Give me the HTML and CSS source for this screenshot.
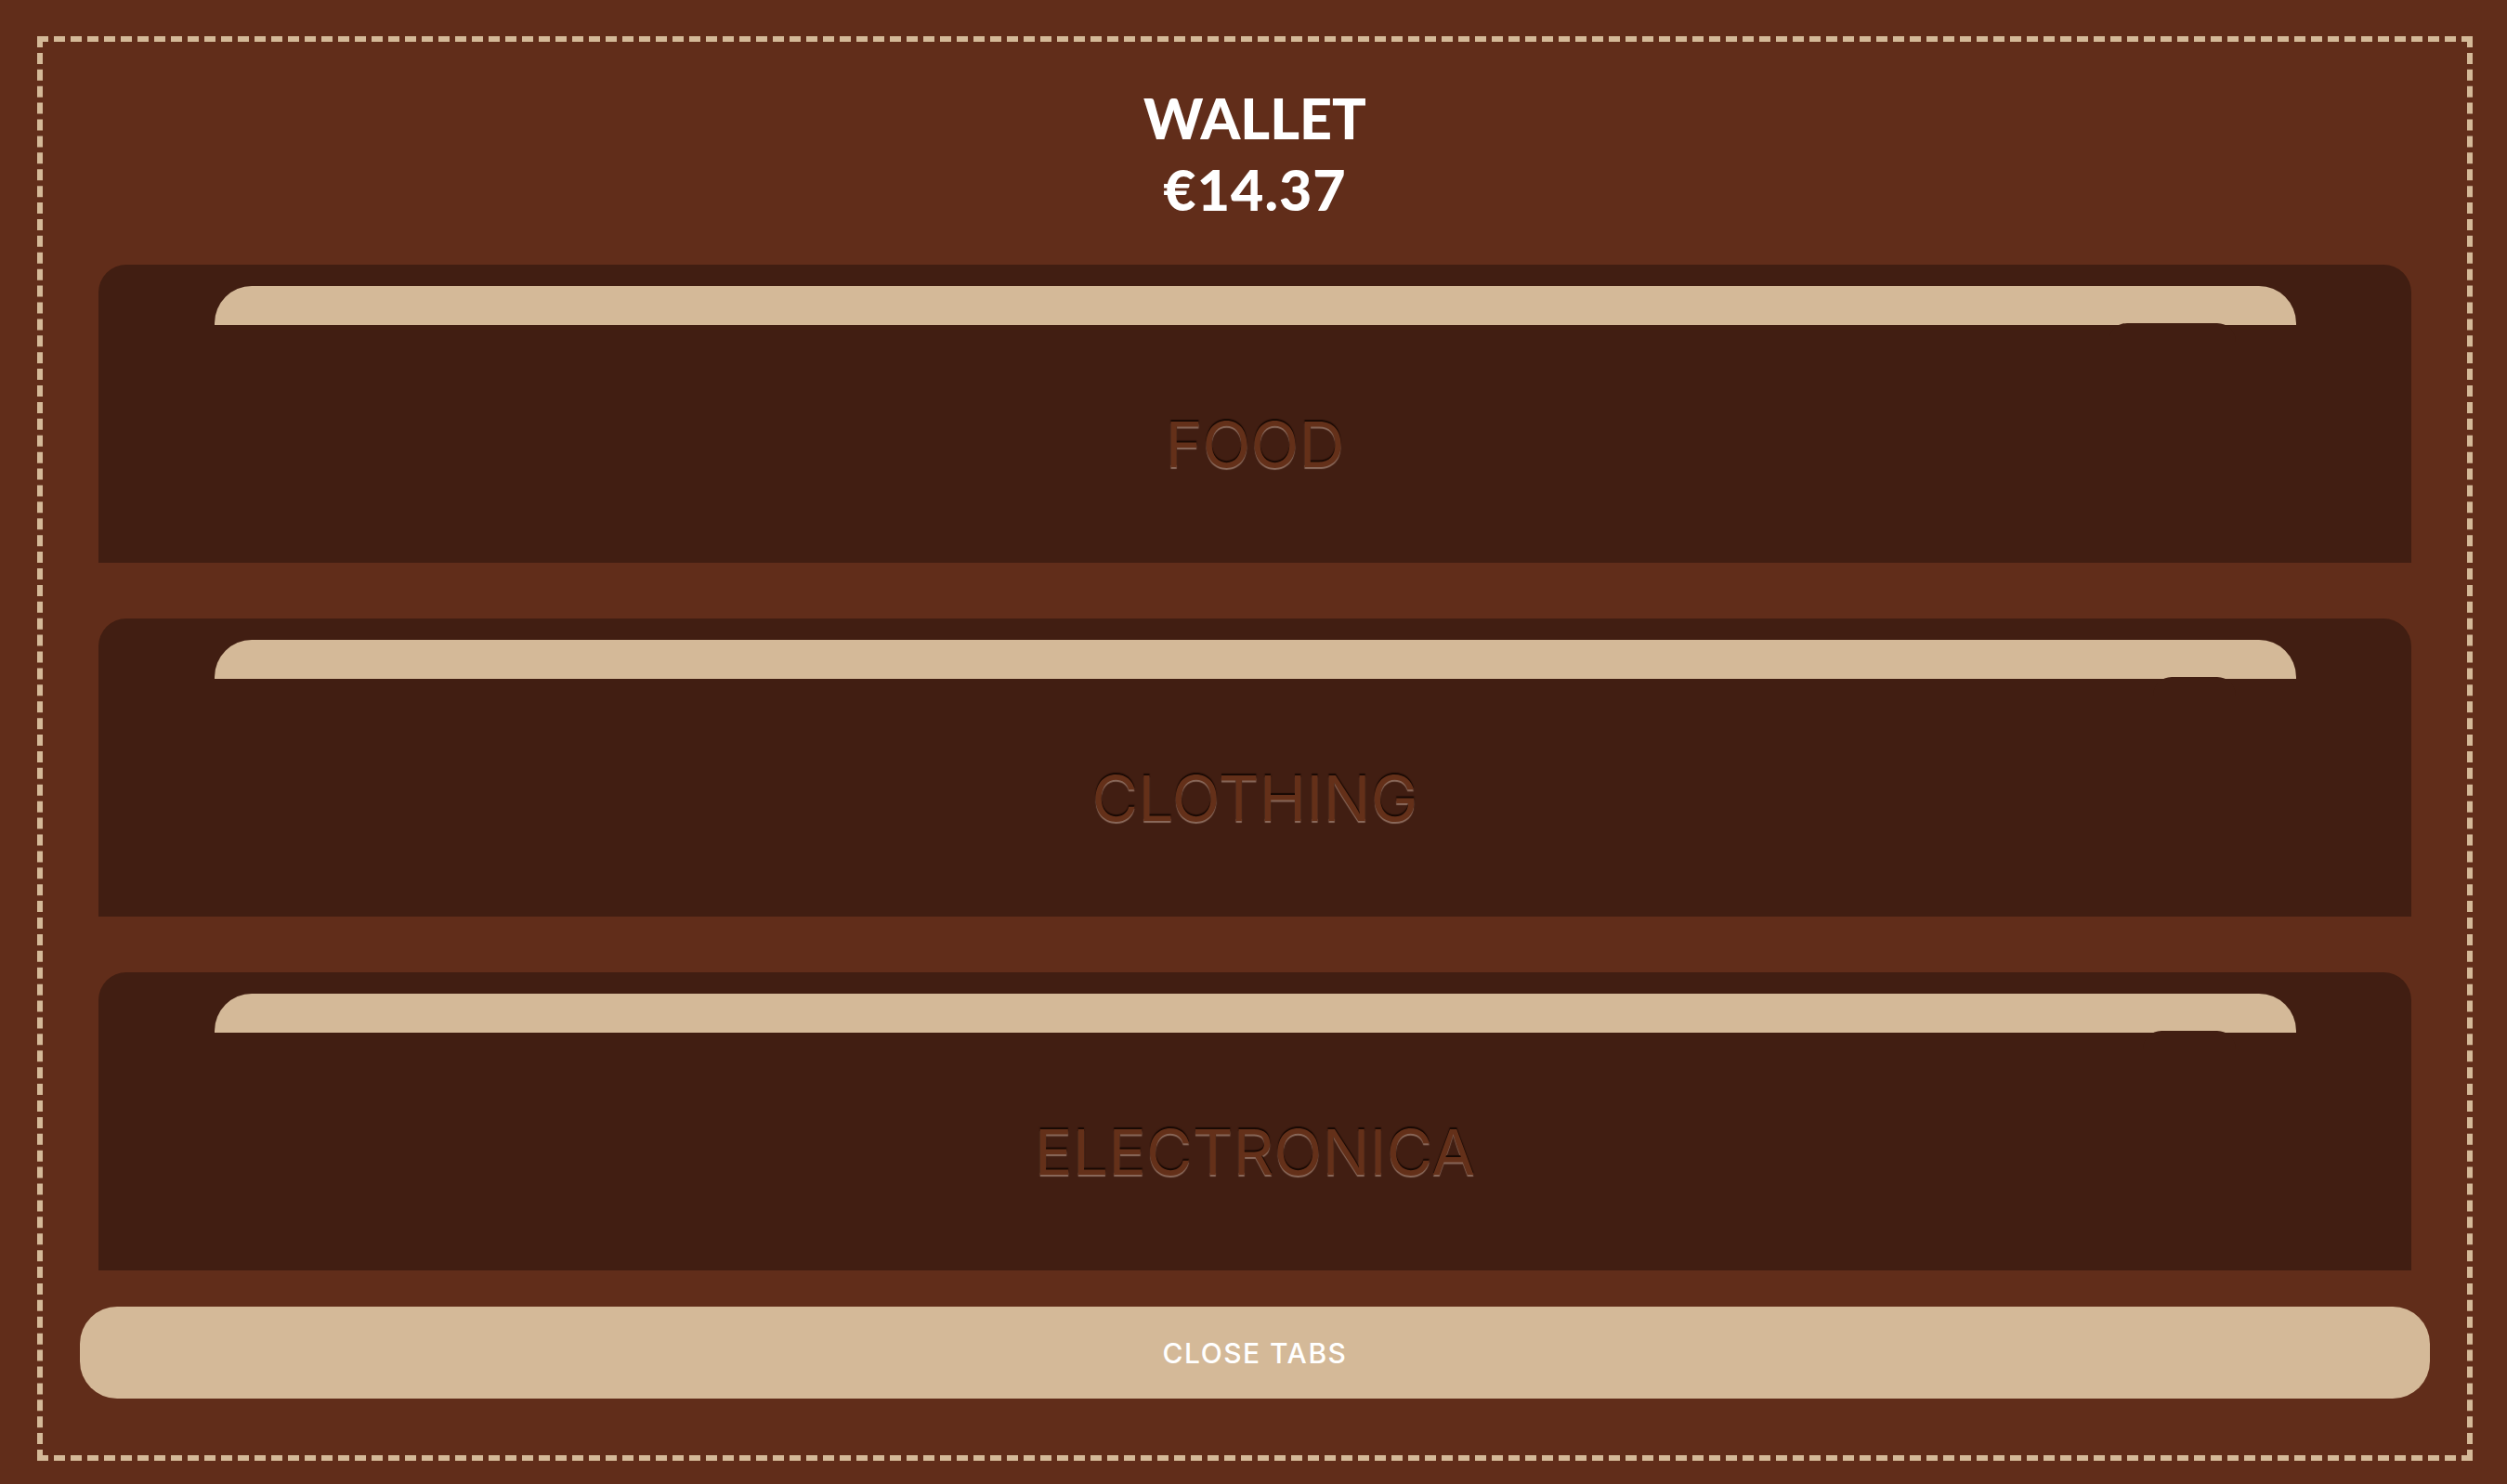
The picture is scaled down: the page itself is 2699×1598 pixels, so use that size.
FILE: index.html
```html
<!DOCTYPE html>
<html lang="en">
<head>
<meta charset="utf-8">
<title>Wallet</title>
<link rel="stylesheet" href="styles.css">
</head>
<body>
<main class="wallet">
  <header class="wallet-head">
    <h1 class="wallet-title">WALLET</h1>
    <p class="wallet-total">€14.37</p>
  </header>
  <section class="pockets">
    <article class="pocket">
      <div class="pocket-tab"></div>
      <div class="pocket-body">
        <span class="pocket-badge badge-wide"></span>
        <h2 class="pocket-name">FOOD</h2>
      </div>
    </article>
    <article class="pocket">
      <div class="pocket-tab"></div>
      <div class="pocket-body">
        <span class="pocket-badge badge-narrow"></span>
        <h2 class="pocket-name">CLOTHING</h2>
      </div>
    </article>
    <article class="pocket">
      <div class="pocket-tab"></div>
      <div class="pocket-body">
        <span class="pocket-badge badge-mid"></span>
        <h2 class="pocket-name">ELECTRONICA</h2>
      </div>
    </article>
  </section>
  <button class="close-btn" type="button">CLOSE TABS</button>
</main>
</body>
</html>
```
FILE: styles.css
```css
html, body {
  margin: 0;
  padding: 0;
  background: #612d1a;
}

.wallet {
  margin: 39px 37px 25px 40px;
  border: 6px dashed #d4b998;
  padding: 43px 60px 61px;
  display: flex;
  flex-direction: column;
}

.wallet-head {
  text-align: center;
  color: #ffffff;
  font-family: Lato, "Liberation Sans", sans-serif;
  font-weight: 900;
  font-size: 61px;
  line-height: 77px;
  margin-bottom: 43px;
}

.wallet-title,
.wallet-total {
  margin: 0;
  font-size: inherit;
  font-weight: inherit;
}

.wallet-total {
  letter-spacing: 1px;
}

.pockets {
  display: flex;
  flex-direction: column;
  gap: 60px;
}

.pocket {
  background: #411e12;
  border-radius: 30px 30px 0 0;
  padding-top: 23px;
  height: 321px;
  box-sizing: border-box;
  display: flex;
  flex-direction: column;
}

.pocket-tab {
  height: 42px;
  margin: 0 124px 0 125px;
  background: #d4b998;
  border-radius: 40px 40px 0 0;
}

.pocket-body {
  position: relative;
  flex: 1;
  display: flex;
  align-items: center;
  justify-content: center;
}

.pocket-badge {
  position: absolute;
  top: -2px;
  right: 189px;
  height: 30px;
  background: #411e12;
  border-radius: 20px 20px 0 0;
}

.badge-wide { width: 137px; }
.badge-narrow { width: 89px; }
.badge-mid { width: 100px; }

.pocket-name {
  margin: 0;
  font-family: Inter, "Noto Sans", sans-serif;
  font-weight: 400;
  font-size: 68px;
  color: #643019;
  text-shadow: 0 -2px 1px #180904, 0 2px 1px #8a695b;
}

.close-btn {
  margin: 39px -20px 0;
  height: 99px;
  border: 0;
  border-radius: 40px;
  background: #d4b998;
  color: #ffffff;
  font-family: Inter, "Noto Sans", sans-serif;
  font-weight: 500;
  font-size: 30px;
  letter-spacing: 1.5px;
  cursor: pointer;
}
```
